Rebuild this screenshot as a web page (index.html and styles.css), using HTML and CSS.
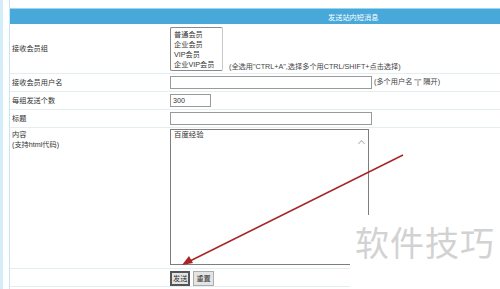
FILE: index.html
```html
<!DOCTYPE html>
<html>
<head>
<meta charset="utf-8"/>
<title>发送站内短消息</title>
<link rel="stylesheet" href="styles.css">
</head>
<body>
<div class="frame">
<table class="form-table">
<colgroup><col class="col-label"><col></colgroup>
<tr><th colspan="2" class="head">发送站内短消息</th></tr>
<tr class="row-group">
<td>接收会员组</td>
<td class="field"><select class="group-list" multiple size="4">
<option>普通会员</option>
<option>企业会员</option>
<option>VIP会员</option>
<option>企业VIP会员</option>
</select><span class="hint hint-low">(全选用"CTRL+A",选择多个用CTRL/SHIFT+点击选择)</span></td>
</tr>
<tr class="row-line">
<td>接收会员用户名</td>
<td class="field"><input class="txt txt-long" type="text"/><span class="hint">(多个用户名 "|" 隔开)</span></td>
</tr>
<tr class="row-line">
<td>每组发送个数</td>
<td class="field"><input class="txt txt-short" type="text" value="300"/></td>
</tr>
<tr class="row-line">
<td>标题</td>
<td class="field"><input class="txt txt-long" type="text"/></td>
</tr>
<tr class="row-content">
<td class="top label-top">内容<br/>(支持html代码)</td>
<td class="field top"><div class="area-wrap"><textarea class="content">百度经验</textarea><span class="scroll-up"></span></div></td>
</tr>
<tr class="row-line">
<td></td>
<td class="field"><button class="btn btn-focus">发送</button><button class="btn">重置</button></td>
</tr>
</table>
</div>

<div class="watermark">软件技巧</div>

<svg class="arrow" width="500" height="289" viewBox="0 0 500 289">
  <line x1="403" y1="155" x2="190" y2="261" stroke="#a82424" stroke-width="1.4"/>
  <polygon points="182,265 189,256 193,263" fill="#a82424"/>
</svg>
</body>
</html>
```

FILE: styles.css
```css
html, body { margin: 0; height: 100%; overflow: hidden; }
body {
  font-family: "Liberation Sans", "Noto Sans CJK SC", sans-serif;
  font-size: 7.2px; color: #333;
  background: #fff;
  border-left: 3px solid #d3eef9;
  box-sizing: border-box;
}
.frame {
  margin-left: 6px; padding-top: 8px;
  border-left: 1px solid #c4e6f5;
  height: 100%; box-sizing: border-box;
}
.form-table {
  width: 100%; border-collapse: collapse; table-layout: fixed;
}
.col-label { width: 158px; }
.head {
  height: 15px; padding: 0 0 0 318px;
  background: #48a8da; color: #fff;
  border-top: 1px solid #9ad6f0;
  font-weight: normal; text-align: left;
}
td {
  padding: 0 0 0 2px; border-bottom: 1px solid #e4edf1;
  vertical-align: middle; line-height: 9.5px;
}
td.top { vertical-align: top; padding-top: 1px; }
td.label-top { padding-top: 2px; }
.row-group td { height: 49px; }
.row-line td { height: 17px; }
.row-content td { height: 138px; }

.group-list {
  width: 53px; height: 44px; margin: 0; padding: 1px;
  font-family: inherit; font-size: 7.2px; color: #333;
  border: 1px solid #8a8a8a; border-right-color: #c8c8c8;
  overflow: hidden; vertical-align: bottom; outline: none;
}
.group-list option { padding: 0 2px; }
.hint { color: #444; margin-left: 2px; }
.hint-low { margin-left: 6px; position: relative; top: 1px; }

.txt {
  height: 13px; box-sizing: border-box; margin: 0;
  border: 1px solid #9a9a9a; padding: 0 2px;
  font-family: inherit; font-size: 7.2px; color: #333;
  vertical-align: middle;
}
.txt-long { width: 202px; }
.txt-short { width: 41px; }

.area-wrap { position: relative; width: 199px; height: 136px; }
.content {
  width: 199px; height: 136px; box-sizing: border-box; margin: 0;
  border: 1px solid #7e7e7e; padding: 1px 3px 0;
  font-family: inherit; font-size: 7.4px; line-height: 8px; color: #333;
  resize: none; overflow: hidden;
}
.scroll-up {
  position: absolute; right: 5px; top: 12px;
  width: 4px; height: 4px;
  border-left: 1px solid #b8b8b8; border-top: 1px solid #b8b8b8;
  transform: rotate(45deg);
}

.btn {
  height: 15px; padding: 0 2px; margin: 1px 3px 0 0;
  font-family: inherit; font-size: 7.2px; color: #333;
  background: #e4e4e4; border: 1px solid #adadad;
  vertical-align: middle;
}
.btn-focus { border: 2px solid #555; padding: 0 1px; }

.watermark {
  position: absolute; left: 350px; top: 215px;
  width: 150px; height: 74px; box-sizing: border-box;
  padding: 5px 0 0 5px;
  background: #fff;
  font-family: "Noto Sans CJK SC", sans-serif;
  color: #d2d2d2; font-size: 34px; line-height: 44px; letter-spacing: 1px;
}
.arrow { position: absolute; left: 0; top: 0; pointer-events: none; }
```
